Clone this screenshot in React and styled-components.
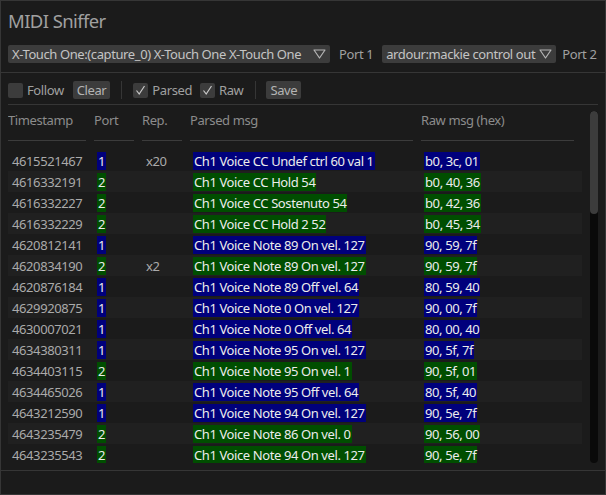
import React from 'react'
import styled, { createGlobalStyle } from 'styled-components'

const GlobalStyle = createGlobalStyle`
  body {
    margin: 0;
    background: #1b1b1b;
    font-family: "Noto Sans", "Open Sans", sans-serif;
    font-size: 13px;
    letter-spacing: -0.4px;
  }
`

const Frame = styled.div`
  width: 606px;
  height: 495px;
  box-sizing: border-box;
  border: 1px solid #363636;
  background: #1b1b1b;
  display: flex;
  flex-direction: column;
  overflow: hidden;
`

const TopPanel = styled.div`
  height: 72px;
  box-sizing: border-box;
  padding: 6px 8px 0 7px;
  border-bottom: 1px solid #363636;
  flex-shrink: 0;
`

const Title = styled.h1`
  margin: 0 0 10px;
  height: 28px;
  line-height: 28px;
  font-size: 18.5px;
  letter-spacing: -0.6px;
  font-weight: 400;
  color: #a0a0a0;
`

const ComboRow = styled.div`
  display: flex;
  align-items: center;
  height: 18px;
`

const Combo = styled.div`
  width: ${p => p.w}px;
  height: 18px;
  flex-shrink: 0;
  box-sizing: border-box;
  padding: 0 4px;
  margin-left: ${p => p.ml || 0}px;
  background: #3c3c3c;
  border-radius: 2px;
  display: flex;
  align-items: center;
  justify-content: space-between;
  color: #c4c4c4;
  white-space: nowrap;
  overflow: hidden;
  & > svg {
    flex-shrink: 0;
  }
`

const Label = styled.span`
  color: #a0a0a0;
  margin-left: ${p => p.ml || 0}px;
  white-space: nowrap;
`

const Central = styled.div`
  flex: 1;
  padding: 8px 7px 0 7px;
  display: flex;
  flex-direction: column;
  min-height: 0;
`

const Toolbar = styled.div`
  display: flex;
  align-items: center;
  height: 18px;
`

const Check = styled.span`
  width: 15px;
  height: 15px;
  background: #3c3c3c;
  border-radius: 2px;
  display: inline-flex;
  align-items: center;
  justify-content: center;
  margin-left: ${p => p.ml || 0}px;
  margin-right: 4px;
`

const Button = styled.span`
  height: 18px;
  line-height: 18px;
  padding: 0 4px;
  background: #3c3c3c;
  border-radius: 2px;
  color: #b4b4b4;
  margin-left: ${p => p.ml || 0}px;
`

const VSep = styled.span`
  width: 1px;
  height: 18px;
  background: #363636;
  margin-left: ${p => p.ml || 0}px;
`

const HSep = styled.div`
  height: 1px;
  background: #363636;
  margin: 5px 0 0 0;
  width: 590px;
`

const ScrollArea = styled.div`
  display: flex;
  gap: 8px;
  margin-top: 6px;
  height: 352px;
`

const Table = styled.div`
  width: 574px;
  overflow: hidden;
`

const cols = '86px 48px 48px 231px 161px'

const HeadRow = styled.div`
  display: grid;
  grid-template-columns: ${cols};
  height: 39px;
`

const HeadCell = styled.div`
  color: #8c8c8c;
  line-height: 18px;
  padding-right: 8px;
  &::after {
    content: '';
    display: block;
    height: 1px;
    background: #3c3c3c;
    margin-top: 11px;
  }
`

const Row = styled.div`
  display: grid;
  grid-template-columns: ${cols};
  height: 21px;
  align-items: center;
  margin: 0 -1px 0 -3px;
  padding-left: 3px;
  background: ${p => (p.striped ? '#202020' : 'transparent')};
`

const Cell = styled.div`
  padding-left: ${p => p.pl || 3}px;
  color: #aaaaaa;
  white-space: nowrap;
  line-height: 18px;
`

const Tag = styled.span`
  display: inline-block;
  line-height: 18px;
  padding: 0 1px;
  color: #ececec;
  background: ${p => (p.port === 1 ? '#00007c' : '#004e00')};
`

const Scrollbar = styled.div`
  width: 8px;
  height: 352px;
  background: #0a0a0a;
  border-radius: 4px;
  overflow: hidden;
`

const Thumb = styled.div`
  height: 103px;
  background: #3c3c3c;
  border-radius: 4px;
`

const BottomPanel = styled.div`
  height: 23px;
  border-top: 1px solid #363636;
  flex-shrink: 0;
`

const Triangle = () => (
  <svg width="13" height="10" viewBox="0 0 13 10">
    <path d="M1 1 L12 1 L6.5 9 Z" fill="none" stroke="#b4b4b4" strokeWidth="1.2" strokeLinejoin="round" />
  </svg>
)

const Tick = () => (
  <svg width="11" height="11" viewBox="0 0 11 11">
    <path d="M1.5 5.5 L4.2 9 L9.5 1" fill="none" stroke="#c8c8c8" strokeWidth="1.2" />
  </svg>
)

const rows = [
  ['4615521467', 1, 'x20', 'Ch1 Voice CC Undef ctrl 60 val 1', 'b0, 3c, 01'],
  ['4616332191', 2, '', 'Ch1 Voice CC Hold 54', 'b0, 40, 36'],
  ['4616332227', 2, '', 'Ch1 Voice CC Sostenuto 54', 'b0, 42, 36'],
  ['4616332229', 2, '', 'Ch1 Voice CC Hold 2 52', 'b0, 45, 34'],
  ['4620812141', 1, '', 'Ch1 Voice Note 89 On vel. 127', '90, 59, 7f'],
  ['4620834190', 2, 'x2', 'Ch1 Voice Note 89 On vel. 127', '90, 59, 7f'],
  ['4620876184', 1, '', 'Ch1 Voice Note 89 Off vel. 64', '80, 59, 40'],
  ['4629920875', 1, '', 'Ch1 Voice Note 0 On vel. 127', '90, 00, 7f'],
  ['4630007021', 1, '', 'Ch1 Voice Note 0 Off vel. 64', '80, 00, 40'],
  ['4634380311', 1, '', 'Ch1 Voice Note 95 On vel. 127', '90, 5f, 7f'],
  ['4634403115', 2, '', 'Ch1 Voice Note 95 On vel. 1', '90, 5f, 01'],
  ['4634465026', 1, '', 'Ch1 Voice Note 95 Off vel. 64', '80, 5f, 40'],
  ['4643212590', 1, '', 'Ch1 Voice Note 94 On vel. 127', '90, 5e, 7f'],
  ['4643235479', 2, '', 'Ch1 Voice Note 86 On vel. 0', '90, 56, 00'],
  ['4643235543', 2, '', 'Ch1 Voice Note 94 On vel. 127', '90, 5e, 7f'],
]

export default function App() {
  return (
    <Frame>
      <GlobalStyle />
      <TopPanel>
        <Title>MIDI Sniffer</Title>
        <ComboRow>
          <Combo w={322}>
            <span>X-Touch One:(capture_0) X-Touch One X-Touch One</span>
            <Triangle />
          </Combo>
          <Label ml={9}>Port 1</Label>
          <Combo w={174} ml={9}>
            <span>ardour:mackie control out</span>
            <Triangle />
          </Combo>
          <Label ml={6}>Port 2</Label>
        </ComboRow>
      </TopPanel>
      <Central>
        <Toolbar>
          <Check />
          <Label>Follow</Label>
          <Button ml={9}>Clear</Button>
          <VSep ml={11} />
          <Check ml={11}><Tick /></Check>
          <Label>Parsed</Label>
          <Check ml={8}><Tick /></Check>
          <Label>Raw</Label>
          <VSep ml={12} />
          <Button ml={10}>Save</Button>
        </Toolbar>
        <HSep />
        <ScrollArea>
          <Table>
            <HeadRow>
              <HeadCell>Timestamp</HeadCell>
              <HeadCell>Port</HeadCell>
              <HeadCell>Rep.</HeadCell>
              <HeadCell>Parsed msg</HeadCell>
              <HeadCell>Raw msg (hex)</HeadCell>
            </HeadRow>
            {rows.map((r, i) => (
              <Row key={i} striped={i % 2 === 1}>
                <Cell pl={4}>{r[0]}</Cell>
                <Cell><Tag port={r[1]}>{r[1]}</Tag></Cell>
                <Cell pl={4}>{r[2]}</Cell>
                <Cell><Tag port={r[1]}>{r[3]}</Tag></Cell>
                <Cell><Tag port={r[1]}>{r[4]}</Tag></Cell>
              </Row>
            ))}
          </Table>
          <Scrollbar>
            <Thumb />
          </Scrollbar>
        </ScrollArea>
      </Central>
      <BottomPanel />
    </Frame>
  )
}
